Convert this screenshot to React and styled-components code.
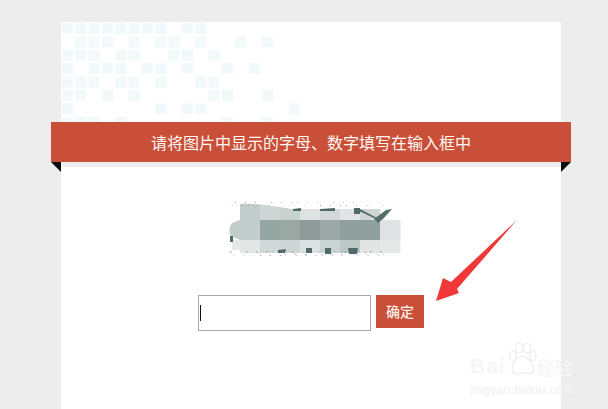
import React from 'react';
import styled, { createGlobalStyle } from 'styled-components';

const GlobalStyle = createGlobalStyle`
  html, body {
    margin: 0;
    height: 100%;
    overflow: hidden;
    background: #ededed;
    font-family: "Noto Sans CJK SC", "Liberation Sans", sans-serif;
  }
`;

const Page = styled.div`
  height: 409px;
  padding: 22px 0 0 61px;
  box-sizing: border-box;
  position: relative;
  overflow: hidden;
`;

const Card = styled.div`
  width: 500px;
  height: 387px;
  background: #fff;
  display: flex;
  flex-direction: column;
`;

const Pattern = styled.svg`
  display: block;
  width: 500px;
  height: 100px;
  flex: none;
`;

const Ribbon = styled.div`
  position: relative;
  flex: none;
  width: 520px;
  height: 40px;
  margin-left: -10px;
  background: #c94f38;
  color: #fff8f5;
  font-size: 16px;
  line-height: 40px;
  text-align: center;
`;

const Fold = styled.span`
  position: absolute;
  top: 40px;
  ${(p) => (p.$side === 'left' ? 'left: 0;' : 'right: 0;')}
  width: 0;
  height: 0;
  border-top: 10px solid #0c0c0c;
  ${(p) =>
    p.$side === 'left'
      ? 'border-left: 10px solid transparent;'
      : 'border-right: 10px solid transparent;'}
`;

const Strip = styled.div`
  flex: none;
  height: 5px;
  background: #ededed;
`;

const Content = styled.div`
  display: flex;
  flex-direction: column;
  align-items: center;
  padding-top: 33px;
`;

const Captcha = styled.svg`
  display: block;
  width: 180px;
  height: 56px;
`;

const Form = styled.div`
  display: flex;
  align-items: flex-start;
  gap: 5px;
  margin-top: 39px;
`;

const InputBox = styled.div`
  width: 173px;
  height: 36px;
  box-sizing: border-box;
  border: 1px solid #a9a9ad;
  background: #fff;
  display: flex;
  align-items: center;
  padding-left: 1px;
`;

const Caret = styled.span`
  width: 1px;
  height: 16px;
  background: #111;
`;

const Button = styled.div`
  width: 48px;
  height: 33px;
  background: #c94f38;
  color: #fbeeea;
  font-size: 14px;
  font-weight: 500;
  line-height: 33px;
  text-align: center;
`;

const Arrow = styled.svg`
  position: absolute;
  left: 430px;
  top: 215px;
  width: 95px;
  height: 92px;
`;

const Watermark = styled.div`
  position: absolute;
  left: 470px;
  top: 342px;
  width: 110px;
  height: 54px;
  color: #f6f6f6;
`;

const Paw = styled.svg`
  position: absolute;
  left: 37px;
  top: 0;
  width: 30px;
  height: 34px;
`;

const WatermarkBai = styled.span`
  position: absolute;
  left: 0;
  top: 13px;
  font: bold 21px/22px "Liberation Sans", sans-serif;
  letter-spacing: 1px;
`;

const WatermarkJy = styled.span`
  position: absolute;
  left: 67px;
  top: 15px;
  font-size: 18px;
  line-height: 20px;
  color: #fafafa;
  text-shadow: 0 0 1px #e2e2e2;
`;

const WatermarkUrl = styled.span`
  position: absolute;
  left: 0;
  top: 41px;
  font: 12px/14px "Liberation Sans", sans-serif;
  letter-spacing: 0.4px;
  white-space: nowrap;
  color: #f8f8f8;
  text-shadow: 0 0 1px #e4e4e4;
`;

const squares = [
  [0, 1, 2, 3, 4, 5, 6, 7, 9, 10],
  [1, 2, 3, 5, 7, 8, 10, 13, 15],
  [0, 1, 2, 4, 5, 8, 9, 11],
  [0, 2, 3, 4, 6, 7, 9, 12, 14],
  [0, 1, 2, 4, 5, 7, 10, 11],
  [0, 1, 3, 5, 11, 12, 15],
  [0, 7, 9, 10, 17],
  [0, 1, 2, 4, 12, 15],
];

const mosaic = [
  { y: 3, h: 17, cells: [[19, '#c2cccb'], [39, '#ced6d5'], [59, '#c8d2cf'], [79, '#dde2e3'], [99, '#d3d9d8'], [119, '#e0e4e4'], [139, '#d0d6d5']] },
  { y: 20, h: 20, cells: [[19, '#c3cdcc'], [39, '#95a5a2'], [59, '#9aa8a4'], [79, '#8f9a9b'], [99, '#9ba8a5'], [119, '#8fa09e'], [139, '#8fa09e'], [159, '#dfe3e3']] },
  { y: 40, h: 13, cells: [[19, '#e2e6e5'], [39, '#d0d9d8'], [59, '#cdd6d5'], [79, '#dce2e2'], [99, '#cad3d3'], [119, '#bdc8c6'], [139, '#e3e5e5'], [159, '#e6e8e8']] },
];

// speckle left over around the blurred captcha
const specks = Array.from({ length: 90 }, (_, i) => ({
  x: 8 + ((i * 37) % 160),
  y: i % 3 === 0 ? 2 + (i % 6) : 50 + ((i * 7) % 6),
  o: 0.2 + ((i * 13) % 5) / 10,
}));

const App = () => (
  <Page>
    <GlobalStyle />
    <Card>
      <Pattern viewBox="0 0 500 100">
        {squares.map((row, r) =>
          row.map((c) => (
            <rect key={`${r}-${c}`} x={c * 13.33 + 1} y={r * 13.4 + 1} width="11" height="11" fill="#f2f9fa" />
          ))
        )}
      </Pattern>
      <Ribbon>
        请将图片中显示的字母、数字填写在输入框中
        <Fold $side="left" />
        <Fold $side="right" />
      </Ribbon>
      <Strip />
      <Content>
        <Captcha viewBox="0 0 180 56">
          {mosaic.map((row) =>
            row.cells.map(([x, fill]) => (
              <rect key={`${row.y}-${x}`} x={x} y={row.y} width="20.5" height={row.h} fill={fill} />
            ))
          )}
          <path d="M19 4 C32 3 52 6 70 9 L165 9 L165 2 L19 0 Z" fill="#fff" />
          <path d="M19 20 L11 23 Q6 30 10 36 L19 40 Z" fill="#c3cdcc" />
          <rect x="11" y="40" width="8" height="10" fill="#e4e8e8" />
          <path d="M9 36 L12 36 L12 42 L9 42 Z" fill="#4f6a68" />
          <path d="M72 9 L80 8 L80 11 L72 11 Z M99 9 L114 8 L114 11 L99 11 Z M133 8 L139 8 L139 14 L133 14 Z M139 9 L156 18 L155 19 L138 11 Z" fill="#4f6a68" />
          <path d="M153 19 L165 10 L171 9 L162 19 L157 23 Z" fill="#54706e" />
          <path d="M57 50 L65 49 L64 53 L57 53 Z M85 48 L91 48 L91 53 L85 53 Z M104 48 L110 48 L110 54 L104 54 Z M127 48 L137 48 L136 54 L128 54 Z" fill="#4f6a68" />
          {specks.map((s, i) => (
            <rect key={i} x={s.x} y={s.y} width="1" height="1" fill="#5a6d6b" opacity={s.o} />
          ))}
        </Captcha>
        <Form>
          <InputBox>
            <Caret />
          </InputBox>
          <Button>确定</Button>
        </Form>
      </Content>
    </Card>
    <Arrow viewBox="430 215 95 92">
      <path d="M517 220 L457 289 L459 293 L436 301 L443 278 L451 282 Z" fill="#f13838" />
    </Arrow>
    <Watermark>
      <WatermarkBai>Bai</WatermarkBai>
      <Paw viewBox="0 0 30 34" fill="none" stroke="#f0f0f0" strokeWidth="1.5">
        <ellipse cx="6" cy="14" rx="3" ry="5" />
        <ellipse cx="12" cy="6" rx="3.5" ry="5" />
        <ellipse cx="20" cy="6" rx="3.5" ry="5" />
        <ellipse cx="26" cy="14" rx="3" ry="5" />
        <path d="M15 14 C9 14 3 25 6 30 C9 34 13 31 16 31 C20 31 23 34 26 30 C29 25 21 14 15 14 Z" />
      </Paw>
      <WatermarkJy>经验</WatermarkJy>
      <WatermarkUrl>jingyan.baidu.com</WatermarkUrl>
    </Watermark>
  </Page>
);

export default App;
